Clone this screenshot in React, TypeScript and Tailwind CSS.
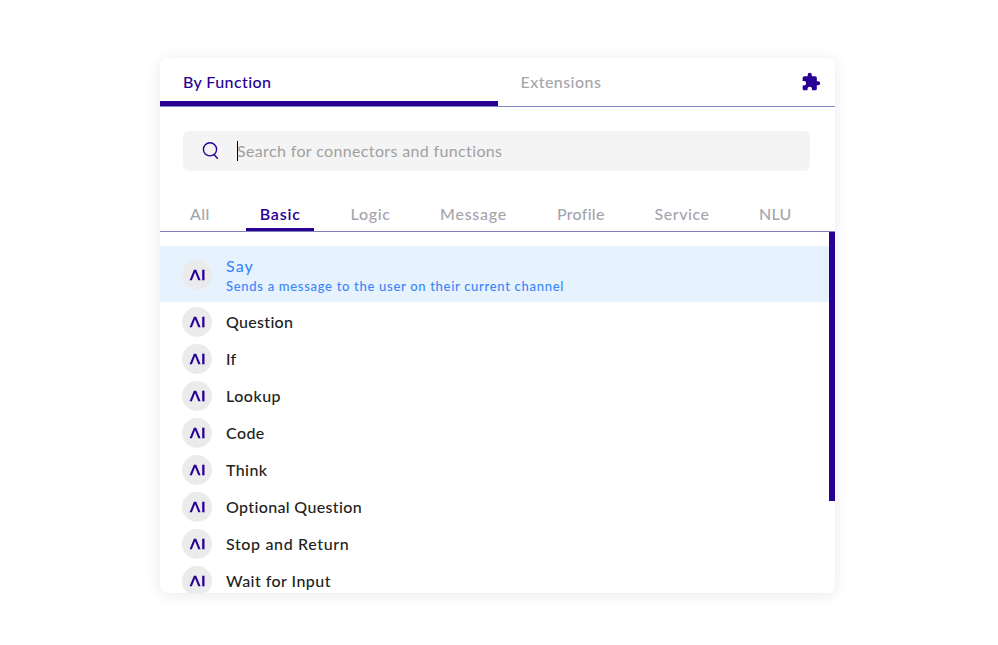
const FUNCTIONS = [
  { name: "Question", tracking: "tracking-[0.3px]" },
  { name: "If", tracking: "tracking-[0.2px]" },
  { name: "Lookup", tracking: "tracking-[0.5px]" },
  { name: "Code", tracking: "tracking-[0.4px]" },
  { name: "Think", tracking: "tracking-[0.4px]" },
  { name: "Optional Question", tracking: "tracking-[0.35px]" },
  { name: "Stop and Return", tracking: "tracking-[0.64px]" },
  { name: "Wait for Input", tracking: "tracking-[0.45px]" },
];

const CATEGORIES = [
  { name: "All", box: "ml-[30px] w-[50px]", tracking: "tracking-[0.4px]" },
  { name: "Logic", box: "ml-[36.5px] w-[89.5px]", tracking: "tracking-[0.7px]" },
  { name: "Message", box: "w-[117px]", tracking: "tracking-[0.75px]" },
  { name: "Profile", box: "w-[97px]", tracking: "tracking-[0.25px]" },
  { name: "Service", box: "pl-[0.5px] w-[105px]", tracking: "tracking-[0.55px]" },
  { name: "NLU", box: "w-[40px]", tracking: "tracking-[0.2px]" },
];

function Badge() {
  return (
    <span className="flex size-[30px] shrink-0 items-center justify-center rounded-full bg-[#ebebeb]">
      <svg width="16" height="12" viewBox="0 0 16 12" fill="#290094">
        <path d="M.6 11.300 4.900 .7h2.300l4.400 10.600H9.300L6.050 3.200 2.900 11.300z" />
        <path d="M13.200 .7h2.300v10.600h-2.300z" />
      </svg>
    </span>
  );
}

function Category({ name, box, tracking }: { name: string; box: string; tracking: string }) {
  return (
    <button className={`shrink-0 text-left ${box}`}>
      <span className={tracking}>{name}</span>
    </button>
  );
}

export default function App() {
  return (
    <div className="flex h-[645px] w-[998px] items-start bg-white pt-[58px] pl-[160px] font-['Lato','Open_Sans',sans-serif] text-base leading-5">
      <div className="flex h-[535px] w-[675px] flex-col overflow-hidden rounded-lg bg-white shadow-[0_2px_16px_rgba(0,0,0,0.09)]">
        <div className="flex h-[49px] shrink-0 border-b border-[#8087c9]">
          <button className="h-12 w-[338px] border-b-[5px] border-[#290094] pt-[4px] pl-[23px] text-left font-medium text-[#290094]">
            <span className="tracking-[0.4px]">By Function</span>
          </button>
          <button className="h-12 w-[303px] pb-px pl-[22.5px] text-left font-medium text-[#a5a5ad]">
            <span className="tracking-[0.45px]">Extensions</span>
          </button>
          <svg className="mt-[14px]" width="20" height="20" viewBox="0 0 24 24" fill="#290094">
            <path d="M20.5 11H19V7c0-1.100-.9-2-2-2h-4V3.500a2.500 2.500 0 0 0-5 0V5H4c-1.100 0-2 .9-2 2v3.800h1.500a2.700 2.700 0 0 1 0 5.400H2V20c0 1.100.9 2 2 2h3.800v-1.500a2.700 2.700 0 0 1 5.400 0V22H17c1.100 0 2-.9 2-2v-4h1.500a2.500 2.500 0 0 0 0-5z" />
          </svg>
        </div>

        <div className="mt-6 ml-[23px] flex h-10 w-[627px] shrink-0 items-center rounded-md bg-[#f4f4f4] pl-[19px]">
          <svg width="18" height="20" viewBox="0 0 18 20" fill="none" stroke="#290094" strokeWidth="1.400">
            <circle cx="8" cy="8.300" r="6.600" />
            <path d="m11.500 13 4.300 4.700" />
          </svg>
          <span className="ml-[17px] h-5 w-px bg-black" />
          <span className="-ml-px tracking-[0.36px] text-[#a0a0a0]">Search for connectors and functions</span>
        </div>

        <div className="mt-[26px] flex h-[35px] shrink-0 border-b border-[#8080b8] font-medium text-[#a5a5ad]">
          <Category {...CATEGORIES[0]} />
          <button className="ml-[6px] h-[34px] w-[68px] shrink-0 border-b-[3px] border-[#290094] pt-[3px] pl-[0.5px] text-center font-semibold text-[#290094]">
            <span className="tracking-[0.8px]">Basic</span>
          </button>
          {CATEGORIES.slice(1).map((category) => (
            <Category key={category.name} {...category} />
          ))}
        </div>

        <div className="flex min-h-0 flex-1 items-start overflow-hidden">
          <div className="w-[669px] shrink-0 pt-[14px]">
            <div className="flex h-14 items-center gap-[14px] bg-[#e7f2ff] pl-[22px] text-[#3b86f8]">
              <div className="pt-[2px]"><Badge /></div>
              <div className="pt-[3px]">
                <div className="h-5 font-medium"><span className="tracking-[1.1px]">Say</span></div>
                <div className="h-5 text-[13px] font-medium"><span className="tracking-[0.7px]">Sends a message to the user on their current channel</span></div>
              </div>
            </div>
            <div className="flex flex-col gap-[7px] pt-[5px] pl-[22px]">
              {FUNCTIONS.map((item) => (
                <div key={item.name} className="flex h-[30px] items-center gap-[14px] font-medium text-[#222]">
                  <Badge />
                  <span className={item.tracking}>{item.name}</span>
                </div>
              ))}
            </div>
          </div>
          <div className="h-[269px] w-[6px] shrink-0 bg-[#290094]" />
        </div>
      </div>
    </div>
  );
}
